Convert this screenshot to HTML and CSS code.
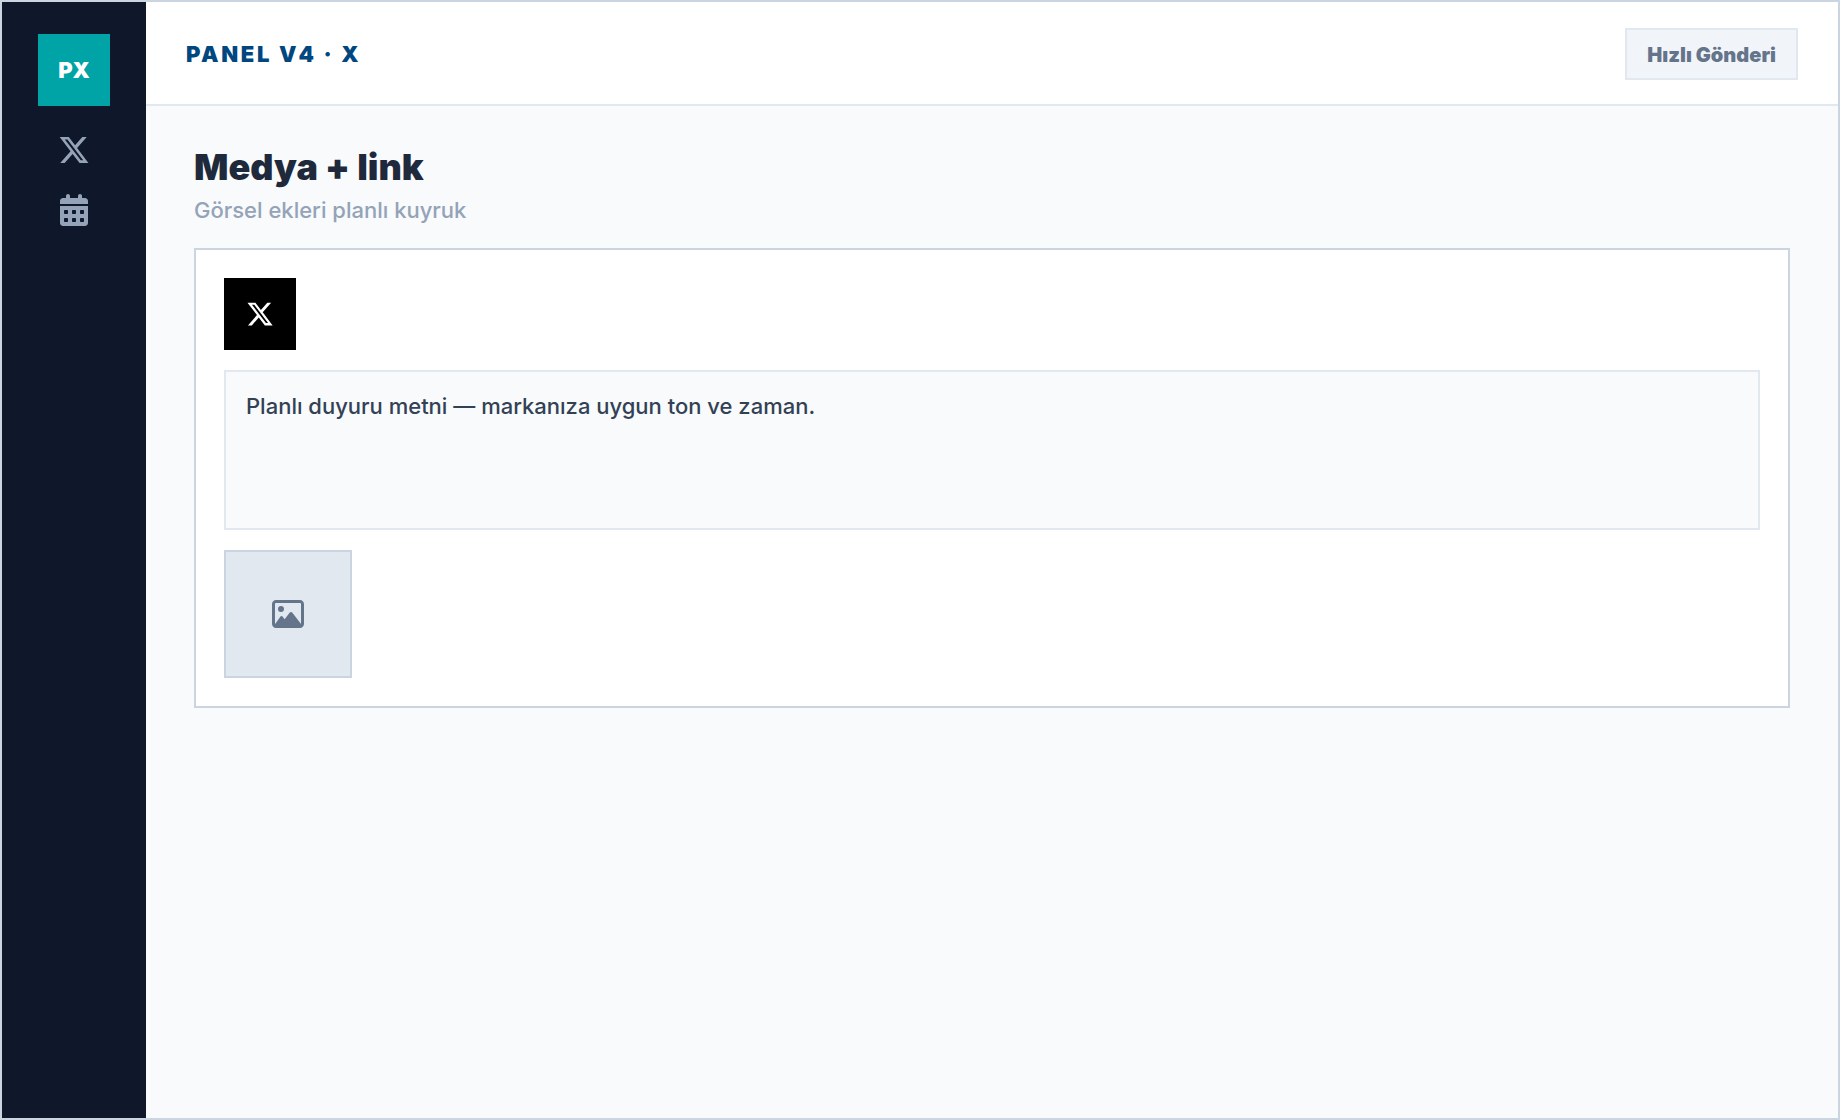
FILE: index.html
```
<!DOCTYPE html>
<html lang="tr">
<head>
    <meta charset="utf-8">
    <meta name="viewport" content="width=device-width, initial-scale=1">
    <title>Panel V4 · X</title>
    <link rel="stylesheet" href="styles.css">
</head>
<body>
    <div class="app">
        <nav class="sidebar">
            <div class="logo">PX</div>
            <a href="#x" class="nav-link" aria-label="X">
                <svg class="icon" viewBox="0 0 512 512"><path d="M389.2 48h70.6L305.6 224.2 487 464H345L233.7 318.6 106.5 464H35.8L200.7 275.5 26.8 48H172.4L272.9 180.9 389.2 48zM364.4 421.8h39.1L151.1 88h-42L364.4 421.8z"/></svg>
            </a>
            <a href="#takvim" class="nav-link" aria-label="Takvim">
                <svg class="icon" viewBox="0 0 448 512"><path d="M128 0c17.7 0 32 14.3 32 32V64H288V32c0-17.7 14.3-32 32-32s32 14.3 32 32V64h48c26.5 0 48 21.5 48 48v48H0V112C0 85.5 21.5 64 48 64H96V32c0-17.7 14.3-32 32-32zM0 192H448V464c0 26.5-21.5 48-48 48H48c-26.5 0-48-21.5-48-48V192zm64 80v32c0 8.8 7.2 16 16 16h32c8.8 0 16-7.2 16-16V272c0-8.8-7.2-16-16-16H80c-8.8 0-16 7.2-16 16zm128 0v32c0 8.8 7.2 16 16 16h32c8.8 0 16-7.2 16-16V272c0-8.8-7.2-16-16-16H208c-8.8 0-16 7.2-16 16zm144-16c-8.8 0-16 7.2-16 16v32c0 8.8 7.2 16 16 16h32c8.8 0 16-7.2 16-16V272c0-8.8-7.2-16-16-16H336zM64 400v32c0 8.8 7.2 16 16 16h32c8.8 0 16-7.2 16-16V400c0-8.8-7.2-16-16-16H80c-8.8 0-16 7.2-16 16zm144-16c-8.8 0-16 7.2-16 16v32c0 8.8 7.2 16 16 16h32c8.8 0 16-7.2 16-16V400c0-8.8-7.2-16-16-16H208zm112 16v32c0 8.8 7.2 16 16 16h32c8.8 0 16-7.2 16-16V400c0-8.8-7.2-16-16-16H336c-8.8 0-16 7.2-16 16z"/></svg>
            </a>
        </nav>

        <div class="page">
            <header class="topbar">
                <div class="brand">PANEL V4 · X</div>
                <button type="button" class="quick-post">Hızlı Gönderi</button>
            </header>

            <main class="content">
                <h1 class="title">Medya + link</h1>
                <p class="subtitle">Görsel ekleri planlı kuyruk</p>

                <form class="composer">
                    <div class="network">
                        <svg class="icon icon-small" viewBox="0 0 512 512"><path d="M389.2 48h70.6L305.6 224.2 487 464H345L233.7 318.6 106.5 464H35.8L200.7 275.5 26.8 48H172.4L272.9 180.9 389.2 48zM364.4 421.8h39.1L151.1 88h-42L364.4 421.8z"/></svg>
                    </div>
                    <textarea class="message" aria-label="Gönderi metni">Planlı duyuru metni — markanıza uygun ton ve zaman.</textarea>
                    <button type="button" class="media" aria-label="Görsel">
                        <svg class="icon" viewBox="0 0 512 512"><path d="M448 80c8.8 0 16 7.2 16 16V415.8l-5-6.5-136-176c-4.5-5.9-11.6-9.3-19-9.3s-14.4 3.4-19 9.3L202 340.7l-30.5-42.7C167 291.7 159.8 288 152 288s-15 3.7-19.5 10.1l-80 112L48 416.3l0-.3V96c0-8.8 7.2-16 16-16H448zM64 32C28.7 32 0 60.7 0 96V416c0 35.3 28.7 64 64 64H448c35.3 0 64-28.7 64-64V96c0-35.3-28.7-64-64-64H64zm80 192a48 48 0 1 0 0-96 48 48 0 1 0 0 96z"/></svg>
                    </button>
                </form>
            </main>
        </div>
    </div>
</body>
</html>
```
FILE: styles.css
```
* {
    box-sizing: border-box;
}

body {
    margin: 0;
    font-family: "Inter", "Liberation Sans", sans-serif;
    font-size: 22px;
    font-weight: 500;
    color: #1e293b;
}

.app {
    display: flex;
    min-height: 100vh;
    border: 2px solid #cbd5e1;
    background: #f8fafc;
}

.icon {
    display: block;
    height: 32px;
    fill: currentColor;
}

.icon-small {
    height: 28px;
}

/* sidebar */
.sidebar {
    display: flex;
    flex-direction: column;
    align-items: center;
    gap: 28px;
    flex: 0 0 144px;
    padding: 32px 0;
    background: #0f172a;
}

.logo {
    display: flex;
    align-items: center;
    justify-content: center;
    width: 72px;
    height: 72px;
    background: #00a3a6;
    color: #fff;
    font-weight: 900;
}

.nav-link {
    color: #94a3b8;
}

/* main column */
.page {
    flex: 1;
    min-width: 0;
}

.topbar {
    display: flex;
    align-items: center;
    justify-content: space-between;
    padding: 26px 40px 24px;
    background: #fff;
    border-bottom: 2px solid #e2e8f0;
}

.brand {
    color: #00467f;
    font-weight: 900;
    letter-spacing: 0.12em;
}

.quick-post {
    padding: 13px 20px 11px;
    border: 2px solid #e2e8f0;
    background: #f1f5f9;
    color: #64748b;
    font: inherit;
    font-size: 20px;
    font-weight: 900;
    line-height: 24px;
    cursor: pointer;
}

.content {
    padding: 40px 48px;
}

.title {
    margin: 0 0 8px;
    font-size: 36px;
    font-weight: 900;
    line-height: 42px;
}

.subtitle {
    margin: 0 0 24px;
    color: #94a3b8;
    line-height: 28px;
}

.composer {
    display: flex;
    flex-direction: column;
    align-items: flex-start;
    gap: 20px;
    padding: 28px;
    border: 2px solid #cbd5e1;
    background: #fff;
}

.network {
    display: flex;
    align-items: center;
    justify-content: center;
    width: 72px;
    height: 72px;
    background: #000;
    color: #fff;
}

.message {
    display: block;
    width: 100%;
    height: 160px;
    padding: 18px 20px;
    border: 2px solid #e2e8f0;
    border-radius: 0;
    background: #f8fafc;
    color: #334155;
    font: inherit;
    line-height: 32px;
    resize: none;
}

.media {
    display: flex;
    align-items: center;
    justify-content: center;
    width: 128px;
    height: 128px;
    padding: 0;
    border: 2px solid #cbd5e1;
    background: #e2e8f0;
    color: #64748b;
    cursor: pointer;
}
```
